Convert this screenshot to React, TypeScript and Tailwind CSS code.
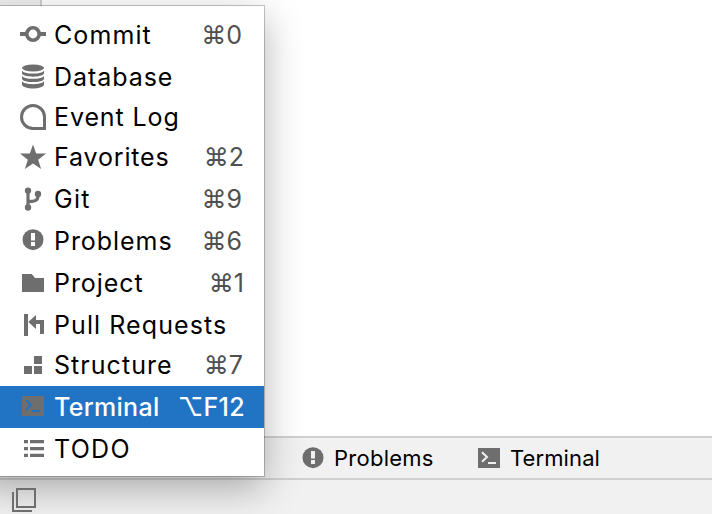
import type { ReactNode } from "react";

const ProblemMark = ({ hole }: { hole: string }) => (
  <>
    <circle cx="17" cy="19.7" r="10.5" fill="#6e6e6e" />
    <path d="M15 13h4v7.5h-4zM15 22h4v4h-4z" fill={hole} />
  </>
);

const TerminalMark = ({ hole }: { hole: string }) => (
  <>
    <path d="M6 10h22v20H6z" fill="#6e6e6e" />
    <path d="M10 14.3l5 4.7l-5 4.7" fill="none" stroke={hole} strokeWidth="2" />
    <path d="M16 24h8v2h-8z" fill={hole} />
  </>
);

const Icon = ({ children }: { children: ReactNode }) => (
  <svg className="h-10 w-8 shrink-0" viewBox="0 0 32 40" fill="#6e6e6e">
    {children}
  </svg>
);

type Item = {
  label: string;
  height: string;
  tracking: string;
  shortcut?: string;
  keyChar?: string;
  end?: string;
  selected?: boolean;
  icon: ReactNode;
};

const items: Item[] = [
  {
    label: "Commit", height: "h-[42px]", tracking: "tracking-[1.1px]", keyChar: "⌘", shortcut: "0", end: "mr-[22px]",
    icon: (
      <>
        <path d="M4 18h6v4H4zM24 18h6v4h-6z" />
        <circle cx="17" cy="20" r="6.2" fill="none" stroke="#6e6e6e" strokeWidth="3.6" />
      </>
    ),
  },
  {
    label: "Database", height: "h-10", tracking: "tracking-[0.95px]",
    icon: (
      <>
        <ellipse cx="17" cy="12" rx="11" ry="3.5" />
        <path d="M6 14.4C8 18.6 26 18.6 28 14.4V17.6C26 21.8 8 21.8 6 17.6z" />
        <path d="M6 19.7C8 23.9 26 23.9 28 19.7V22.9C26 27.1 8 27.1 6 22.9z" />
        <path d="M6 25C8 29.2 26 29.2 28 25V29C26 33.6 8 33.6 6 29z" />
      </>
    ),
  },
  {
    label: "Event Log", height: "h-10", tracking: "tracking-[0.9px]",
    icon: <path d="M28.5 32.5H17A11.5 11.5 0 1 1 28.5 21z" fill="none" stroke="#6e6e6e" strokeWidth="3" />,
  },
  {
    label: "Favorites", height: "h-[42px]", tracking: "tracking-[0.85px]", keyChar: "⌘", shortcut: "2", end: "mr-[20px]",
    icon: <path d="M17 8.5l3.2 9.1h9.8l-7.8 6.1l2.9 9.3l-8.1-5.6L8.9 33l2.9-9.3L4 17.6h9.8z" />,
  },
  {
    label: "Git", height: "h-[42px]", tracking: "tracking-[1.3px]", keyChar: "⌘", shortcut: "9", end: "mr-[22px]",
    icon: (
      <>
        <circle cx="12" cy="12.6" r="3.2" />
        <circle cx="22" cy="16" r="3.2" />
        <circle cx="12" cy="29.5" r="3.2" />
        <path d="M12 13v16M22 16v2q0 5-6 5.4l-4 .3" fill="none" stroke="#6e6e6e" strokeWidth="3.2" />
      </>
    ),
  },
  {
    label: "Problems", height: "h-[42px]", tracking: "tracking-[0.95px]", keyChar: "⌘", shortcut: "6", end: "mr-[22px]",
    icon: <ProblemMark hole="#ffffff" />,
  },
  {
    label: "Project", height: "h-[42px]", tracking: "tracking-[0.95px]", keyChar: "⌘", shortcut: "1", end: "mr-[20px]",
    icon: <path d="M6 12h9.7l3.3 4h9v14H6z" />,
  },
  {
    label: "Pull Requests", height: "h-10", tracking: "tracking-[1.08px]",
    icon: <path d="M8 10h4v22H8zM12.3 18l7.7-7v5h8v14h-4V20h-4v5z" />,
  },
  {
    label: "Structure", height: "h-[42px]", tracking: "tracking-[1.05px]", keyChar: "⌘", shortcut: "7", end: "mr-[21px]",
    icon: <path d="M18 12h8v8h-8zM8 22h8v8H8zM18 22h8v8h-8z" />,
  },
  {
    label: "Terminal", height: "h-[42px]", tracking: "tracking-[0.3px]", keyChar: "⌥", shortcut: "F12", end: "mr-[19px]", selected: true,
    icon: <TerminalMark hole="#2173c4" />,
  },
  {
    label: "TODO", height: "h-[42px]", tracking: "tracking-[1.3px]",
    icon: <path d="M8 12h4v3.3H8zM14 12h14v3.3H14zM8 19h4v3.3H8zM14 19h14v3.3H14zM8 25.7h4V29H8zM14 25.7h14V29H14z" />,
  },
];

const MenuRow = ({ item }: { item: Item }) => (
  <div className={`flex shrink-0 items-start pl-4 text-[25px] leading-[42px] ${item.height} ${item.selected ? "bg-[#2173c4] font-medium text-white" : "text-black"}`}>
    <Icon>{item.icon}</Icon>
    <span className={`ml-1.5 whitespace-nowrap ${item.tracking}`}>{item.label}</span>
    {item.shortcut && (
      <span className={`ml-auto flex whitespace-nowrap ${item.end} ${item.selected ? "tracking-[0.3px] text-white" : "text-[#505050]"}`}>
        <span>{item.keyChar}</span>
        <span>{item.shortcut}</span>
      </span>
    )}
  </div>
);

export default function App() {
  return (
    <div className="relative flex h-[514px] w-[712px] flex-col overflow-hidden bg-white font-['Inter','Liberation_Sans',sans-serif]">
      <div className="flex h-[436px]">
        <div className="w-[42px] border-r-2 border-[#cfcfcf] bg-[#f0f0f0]" />
      </div>
      <div className="flex h-11 items-start border-y-2 border-[#d0d0d0] bg-[#f1f1f1] pl-[296px] text-[22px] leading-10">
        <Icon><ProblemMark hole="#f1f1f1" /></Icon>
        <span className="ml-1.5 w-[138px] whitespace-nowrap tracking-[0.25px]">Problems</span>
        <Icon><TerminalMark hole="#f1f1f1" /></Icon>
        <span className="ml-1.5 whitespace-nowrap tracking-[0.1px]">Terminal</span>
      </div>
      <div className="flex-1 bg-[#f1f1f1]" />

      <div className="absolute top-[6px] left-[-24px] flex h-[470px] w-[288px] flex-col bg-white pt-2 pl-6 shadow-[0_0_0_1px_rgba(0,0,0,0.22),0_12px_36px_rgba(0,0,0,0.3)]">
        {items.map((item) => (
          <MenuRow key={item.label} item={item} />
        ))}
      </div>
      <svg className="absolute bottom-0 left-0 h-8 w-10" viewBox="0 0 40 32" fill="none" stroke="#6e6e6e" strokeWidth="2">
        <path d="M17 7h18v18H17zM13 10v19h19" />
      </svg>
    </div>
  );
}
